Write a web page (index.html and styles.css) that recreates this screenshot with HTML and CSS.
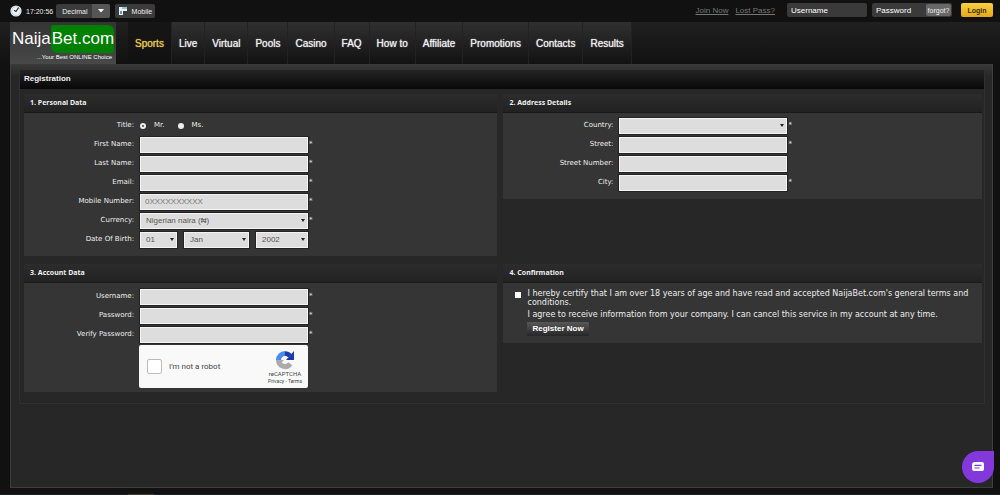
FILE: index.html
```html
<!DOCTYPE html>
<html lang="en">
<head>
<meta charset="utf-8">
<title>NaijaBet.com - Registration</title>
<link rel="stylesheet" href="styles.css">
</head>
<body>
<div class="topbar">
  <svg class="clock" viewBox="0 0 12 12"><circle cx="6" cy="6" r="5.6" fill="#eef3f6"/><circle cx="6" cy="6" r="4.4" fill="none" stroke="#b4c0c8" stroke-width=".7"/><path d="M8.6 2.6 6 6.4 4 5.2" fill="none" stroke="#26323c" stroke-width="1.1"/></svg>
  <time class="time">17:20:56</time>
  <button class="odds" type="button"><span class="odds-label">Decimal</span><span class="odds-arrow"><svg viewBox="0 0 6 4"><path d="M0 0h6L3 3.5z" fill="#fff"/></svg></span></button>
  <button class="mobile" type="button"><svg viewBox="0 0 10 10"><path d="M1 1h8v4H5v4H1z" fill="#e9f4f8"/><path d="M4 1h5v2H4z" fill="#8fc3d6"/><path d="M2 5h2v3H2z" fill="#5c9bb4"/></svg>Mobile</button>
  <form class="login">
    <a href="#">Join Now</a>
    <a href="#">Lost Pass?</a>
    <input class="login-field" type="text" placeholder="Username" aria-label="Username">
    <span class="login-field pass"><input type="text" placeholder="Password" aria-label="Password"><button class="forgot" type="button">forgot?</button></span>
    <button class="login-btn" type="button">Login</button>
  </form>
</div>
<header class="header">
  <a class="logo" href="#"><span class="logo-name">Naija<b>Bet.com</b></span><span class="logo-tag">...Your Best ONLINE Choice</span></a>
  <nav class="nav">
    <a class="active" href="#">Sports</a><a href="#">Live</a><a href="#">Virtual</a><a href="#">Pools</a><a href="#">Casino</a><a href="#">FAQ</a><a href="#">How to</a><a href="#">Affiliate</a><a href="#">Promotions</a><a href="#">Contacts</a><a href="#">Results</a>
  </nav>
</header>
<main class="panel">
  <div class="frame">
    <h1>Registration</h1>
    <form class="sections">
      <section>
        <h2>1. Personal Data</h2>
        <div class="body">
          <div class="row"><span class="label">Title:</span><span class="radios"><label><input type="radio" name="title" checked>Mr.</label><label><input type="radio" name="title">Ms.</label></span></div>
          <div class="row"><label for="first">First Name:</label><input class="field" id="first" type="text"><i>*</i></div>
          <div class="row"><label for="last">Last Name:</label><input class="field" id="last" type="text"><i>*</i></div>
          <div class="row"><label for="email">Email:</label><input class="field" id="email" type="text"><i>*</i></div>
          <div class="row"><label for="phone">Mobile Number:</label><input class="field" id="phone" type="text" placeholder="0XXXXXXXXXX"><i>*</i></div>
          <div class="row"><label for="currency">Currency:</label><select class="field" id="currency"><option>Nigerian naira (₦)</option></select><i>*</i></div>
          <div class="row"><label for="day">Date Of Birth:</label><span class="dates"><select class="field" id="day"><option>01</option></select><select class="field" aria-label="Month"><option>Jan</option></select><select class="field" aria-label="Year"><option>2002</option></select></span></div>
        </div>
      </section>
      <section>
        <h2>2. Address Details</h2>
        <div class="body">
          <div class="row"><label for="country">Country:</label><select class="field" id="country"><option></option></select><i>*</i></div>
          <div class="row"><label for="street">Street:</label><input class="field" id="street" type="text"><i>*</i></div>
          <div class="row"><label for="number">Street Number:</label><input class="field" id="number" type="text"></div>
          <div class="row"><label for="city">City:</label><input class="field" id="city" type="text"><i>*</i></div>
        </div>
      </section>
      <section>
        <h2>3. Account Data</h2>
        <div class="body account">
          <div class="row"><label for="user">Username:</label><input class="field" id="user" type="text"><i>*</i></div>
          <div class="row"><label for="pw">Password:</label><input class="field" id="pw" type="password"><i>*</i></div>
          <div class="row"><label for="pw2">Verify Password:</label><input class="field" id="pw2" type="password"><i>*</i></div>
          <div class="captcha">
            <label><input type="checkbox">I'm not a robot</label>
            <div class="captcha-brand">
              <svg viewBox="0 0 20 20"><path d="M3.5 10A6.5 6.5 0 0 1 10 3.5" fill="none" stroke="#4a8af4" stroke-width="5"/><path d="M10 3.5a6.5 6.5 0 0 1 5 2.4" fill="none" stroke="#1c3aa9" stroke-width="4.5"/><path d="M19 1v9h-8z" fill="#1c3aa9"/><path d="M3.5 10a6.5 6.5 0 0 0 11.8 3.8" fill="none" stroke="#ababab" stroke-width="5"/><path d="M1 10h8L5 14z" fill="#ababab"/></svg>
              <span>reCAPTCHA</span>
              <small>Privacy - Terms</small>
            </div>
          </div>
        </div>
      </section>
      <section>
        <h2>4. Confirmation</h2>
        <div class="body confirm">
          <input id="agree" type="checkbox">
          <div class="confirm-text">
            <label for="agree">I hereby certify that I am over 18 years of age and have read and accepted NaijaBet.com's general terms and conditions.</label>
            <p>I agree to receive information from your company. I can cancel this service in my account at any time.</p>
            <button class="register" type="button">Register Now</button>
          </div>
        </div>
      </section>
    </form>
  </div>
</main>
<footer class="strip"><span></span></footer>
<button class="chat" type="button" aria-label="Chat"><svg viewBox="0 0 14 12"><path d="M4 1h7q2 0 2 2v5q0 2-2 2H3q-2 0-2-2V4q0-3 3-3z" fill="#fff"/><path d="M3.5 4.3h7M3.5 7h5" stroke="#8338dc" stroke-width="1.2"/></svg></button>
</body>
</html>
```
FILE: styles.css
```css
* { box-sizing: border-box; }
body {
  margin: 0;
  min-height: 100vh;
  display: flex;
  flex-direction: column;
  background: #111;
  color: #eee;
  font: 7px/9px "Liberation Sans", Arial, sans-serif;
}
button, input, select { font: inherit; color: inherit; margin: 0; padding: 0; border: 0; }
a { color: inherit; }
h1, h2, p { margin: 0; }

.topbar { display: flex; align-items: center; height: 22px; padding: 0 7px 0 10px; background: #111; }
.clock { width: 12px; height: 12px; }
.time { margin: 0 3px 0 4px; font-size: 7px; }
.odds { display: flex; height: 14px; align-items: stretch; background: #3b3b3b; border-radius: 2px; overflow: hidden; }
.odds-label { padding: 3px 4px 0 6px; }
.odds-arrow { display: flex; align-items: center; justify-content: center; width: 18px; background: #555; }
.odds-arrow svg { width: 6px; height: 4px; }
.mobile { display: flex; align-items: center; gap: 4px; height: 14px; margin-left: 5px; padding: 0 3px; background: #3b3b3b; border-radius: 2px; }
.mobile svg { width: 10px; height: 10px; }
.login { display: flex; align-items: center; height: 14px; margin: 0 0 2px auto; font-size: 8px; }
.login > a { margin-right: 7px; color: #777; }
.login-field { width: 80px; height: 14px; padding: 0 4px; background: #3a3a3a; border-radius: 2px; }
.login-field::placeholder, .pass input::placeholder { color: #fff; opacity: 1; }
.login > .login-field:first-of-type { margin-left: 5px; }
.pass { display: flex; align-items: center; margin-left: 4px; padding-right: 1px; }
.pass input { flex: 1; min-width: 0; background: none; }
.forgot { width: 25px; height: 12px; background: #686868; border-radius: 2px; font-size: 7px; }
.login-btn { width: 32px; height: 14px; margin-left: 9px; background: linear-gradient(#f8d040, #e4a81c); border-radius: 2px; color: #3c2c00; font-size: 7px; font-weight: bold; }

.header { display: flex; height: 42px; padding-left: 10px; background: linear-gradient(#202020, #111); }
.logo { display: flex; flex-direction: column; width: 106px; padding: 3px 4px 0 2px; background: linear-gradient(#343434, #484848); color: #fff; text-decoration: none; }
.logo-name { display: flex; height: 28px; font-size: 17px; line-height: 28px; }
.logo-name b { flex: 1; padding-left: 1px; background: #008000; border-radius: 2px 6px 2px 6px; font-weight: normal; }
.logo-tag { text-align: right; font-size: 6px; line-height: 9px; white-space: nowrap; }
.nav { display: flex; margin-left: 12px; font-size: 10px; text-shadow: 0 0 1px currentColor; }
.nav a { display: flex; align-items: center; padding: 0 7px; border-right: 1px solid #222; background: linear-gradient(#303030, #121212); text-decoration: none; }
.nav .active { background: linear-gradient(#161616, #111); color: #e8c850; }

.panel { flex: 1; margin: 0 7px 0 10px; padding: 6px 7px 0 8px; background: linear-gradient(#3a3a3a, #272727 12px); border: 1px solid #3e3e3e; border-width: 0 1px 1px; }
.frame { border: 1px solid #303030; border-top: 0; }
h1 { height: 19px; padding-left: 4px; background: linear-gradient(#242424, #080808); font-size: 8px; line-height: 18px; }
.sections { display: grid; grid-template-columns: 473fr 478fr; gap: 8px 6px; align-items: start; padding: 5px 2px 11px 4px; }
h2 { height: 19px; padding-left: 6px; background: linear-gradient(#2c2c2c, #222); border-bottom: 1px solid #191919; font: bold 7px/18px "Noto Sans", sans-serif; }
.body { padding: 3px 0 7px; background: #353535; font-family: "DejaVu Sans", Verdana, sans-serif; }
.row { display: flex; align-items: center; height: 19px; }
.row > label, .label { width: 110px; margin-right: 6px; text-align: right; }
.row i { margin-left: 1px; font-style: normal; }
.field { width: 168px; height: 16px; padding: 0 4px; background-color: #ddd; border: 1px solid #f4f4f4; border-radius: 0; outline: 1px solid #222; color: #555; font: 8px "Liberation Sans", "DejaVu Sans", sans-serif; }
.field::placeholder { color: #777; opacity: 1; }
select.field { padding: 0 5px; appearance: none; background-image: url("data:image/svg+xml,%3Csvg xmlns='http://www.w3.org/2000/svg' viewBox='0 0 4 3'%3E%3Cpath d='M0 0h4L2 3z' fill='%23222'/%3E%3C/svg%3E"); background-repeat: no-repeat; background-position: right 2px center; background-size: 4px 3px; }
.dates { display: grid; grid-template-columns: 37fr 65fr 52fr; gap: 7px; width: 168px; }
.dates .field { width: 100%; }
.radios { display: flex; gap: 13px; }
.radios label { display: flex; align-items: center; gap: 8px; }
.radios input { appearance: none; width: 6px; height: 6px; background: #eee; border-radius: 50%; }
.radios input:checked { background: #444; border: 2px solid #eee; }
.account { padding: 4px 0; }
.captcha { display: flex; justify-content: space-between; width: 169px; height: 43px; margin: 1px 0 0 115px; padding: 0 6px 0 8px; background: #f9f9f9; border-radius: 2px; color: #444; font-family: Roboto, sans-serif; }
.captcha label { display: flex; align-items: center; gap: 7px; font-size: 8px; }
.captcha input { appearance: none; width: 15px; height: 15px; background: #fff; border: 1px solid #bbb; border-radius: 2px; }
.captcha-brand { display: flex; flex-direction: column; align-items: center; padding-top: 5px; font-size: 6px; line-height: 8px; }
.captcha-brand svg { width: 20px; height: 20px; }
.captcha-brand small { font-size: 5px; line-height: 6px; }
.confirm { display: flex; align-items: flex-start; gap: 6px; padding: 6px 6px 7px 12px; font-size: 8px; }
.confirm > input { appearance: none; flex: none; width: 6px; height: 6px; margin-top: 3px; background: #fff; }
.confirm-text label { display: block; }
.confirm-text p { margin: 3px 0; }
.register { display: block; height: 14px; padding: 0 5px; background: linear-gradient(#585858, #262626); color: #fff; font: bold 8px/14px "Liberation Sans", Arial, sans-serif; }

.strip { height: 7px; padding-left: 128px; border-bottom: 1px solid #16202a; }
.strip span { display: block; width: 26px; height: 7px; border-bottom: 1px solid #4a3a38; }
.chat { position: fixed; right: 6px; bottom: 12px; display: flex; align-items: center; justify-content: center; width: 32px; height: 32px; background: #8338dc; border-radius: 50% 0 50% 50%; }
.chat svg { width: 14px; height: 12px; }
```
